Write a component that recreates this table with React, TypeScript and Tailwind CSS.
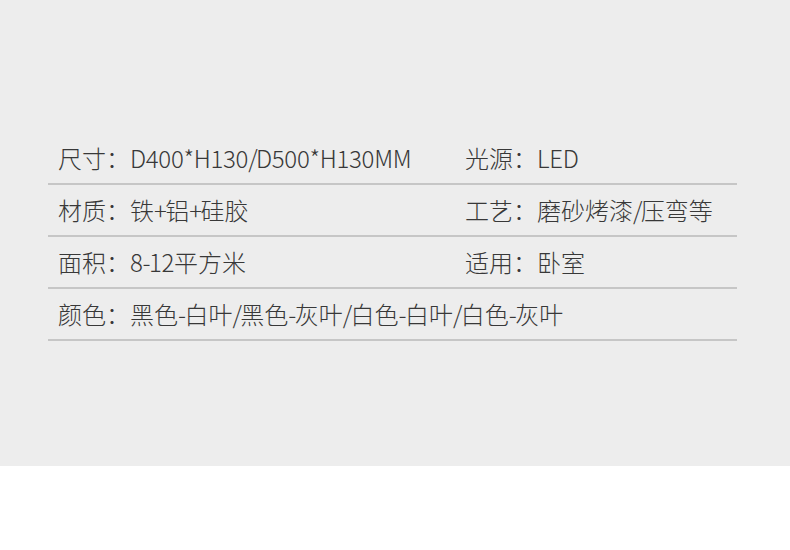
const rows: [string, string][][] = [
  [["尺寸：", "D400*H130/D500*H130MM"], ["光源：", "LED"]],
  [["材质：", "铁+铝+硅胶"], ["工艺：", "磨砂烤漆/压弯等"]],
  [["面积：", "8-12平方米"], ["适用：", "卧室"]],
  [["颜色：", "黑色-白叶/黑色-灰叶/白色-白叶/白色-灰叶"]],
];

// latin runs and punctuation in the reference are set tighter than the CJK text
function Value({ text }: { text: string }) {
  const parts = text.split(/([A-Za-z0-9*]+|[-/+])/);
  return (
    <>
      {parts.map((p, i) => {
        if (/^[A-Za-z0-9*]+$/.test(p)) return <span key={i} className="tracking-[-0.3px]">{p}</span>;
        if (/^[-/+]$/.test(p)) return <span key={i} className="tracking-[-1.6px]">{p}</span>;
        return <span key={i}>{p}</span>;
      })}
    </>
  );
}

export default function App() {
  return (
    <div className="w-[790px] h-[550px] bg-white" style={{ fontFamily: '"Noto Sans CJK SC", "Noto Sans", sans-serif' }}>
      <div className="h-[466px] bg-[#ededed] pt-[133px] pl-[48px]">
        <div className="w-[689px]">
          {rows.map((r, i) => (
            <div key={i} className="flex h-[52px] items-center border-b-2 border-[#c6c6c6] pl-[10px] text-[24px] font-light text-[#383838]">
              {r.map(([k, v], j) => (
                <div key={j} className={j === 0 ? "w-[407px] shrink-0 whitespace-nowrap" : "whitespace-nowrap"}>
                  {k}
                  <Value text={v} />
                </div>
              ))}
            </div>
          ))}
        </div>
      </div>
    </div>
  );
}
